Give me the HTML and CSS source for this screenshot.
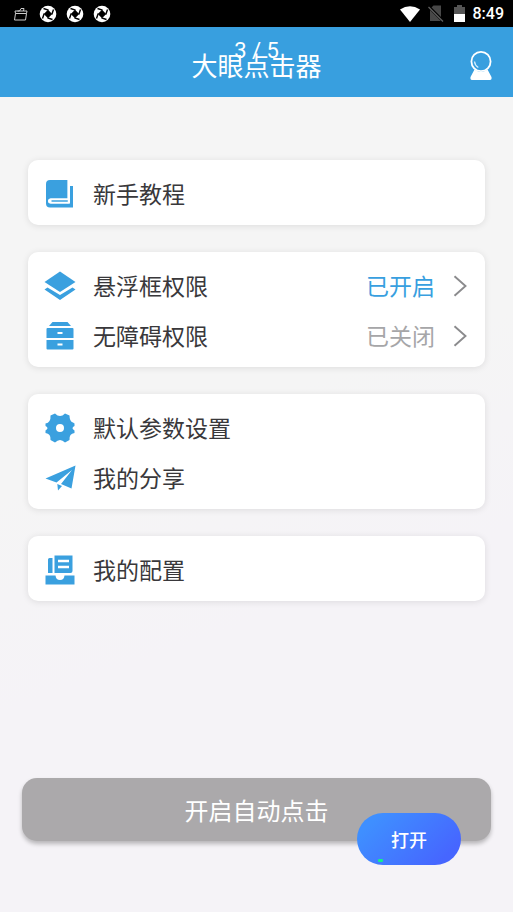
FILE: index.html
```html
<!DOCTYPE html>
<html lang="zh-CN">
<head>
<meta charset="utf-8">
<meta name="viewport" content="width=device-width, initial-scale=1">
<title>大眼点击器</title>
<link rel="stylesheet" href="styles.css">
</head>
<body>
<svg class="defs" aria-hidden="true">
  <symbol id="shutter" viewBox="0 0 18 18">
    <circle cx="9" cy="9" r="8.300" fill="#fff"/>
    <path d="M9 4.800 13.200 9 9 13.200 4.800 9z" fill="#000"/>
    <path d="M9.500 5.200 4.500 3.500M12.800 9.500l1.700-5M8.500 12.800l5 1.700M5.200 8.500l-1.700 5" stroke="#000" stroke-width="1.400"/>
  </symbol>
  <symbol id="chevron" viewBox="0 0 14 22">
    <path d="M1.500 1.200 12.500 11 1.500 20.800" fill="none" stroke="#8b8b8d" stroke-width="1.900"/>
  </symbol>
</svg>
<div class="statusbar">
  <div class="notices">
    <svg class="notice" viewBox="0 0 18 18"><path d="M3.500 8.500h11l-1 6.500H2.500zM3.500 8.500 3 6h4.500L9 3.500h3l-.5 2.500H15l-.5 2.500M5.500 6h6" fill="none" stroke="#ccc" stroke-width="1"/></svg>
    <svg class="notice"><use href="#shutter"/></svg>
    <svg class="notice"><use href="#shutter"/></svg>
    <svg class="notice"><use href="#shutter"/></svg>
  </div>
  <div class="signals">
    <svg class="wifi" viewBox="0 0 20 16"><path d="M0 3.500Q10-3.200 20 3.500L10 16z" fill="#fff"/></svg>
    <svg class="sim" viewBox="0 0 16 17"><path d="M2 4 5.500.5H13V16H2z" fill="#484848"/><path d="M0 1 15 16" stroke="#000" stroke-width="3"/><path d="M.5 2 15 16.500" stroke="#606060" stroke-width="1.300"/></svg>
    <svg class="battery" viewBox="0 0 11 17"><path d="M0 2h3V0h5v2h3v7H0z" fill="#555"/><path d="M0 9h11v8H0z" fill="#fff"/></svg>
    <span>8:49</span>
  </div>
</div>
<header class="topbar">
  <h1>大眼点击器</h1>
  <span class="counter">3 / 5</span>
  <button class="profile" aria-label="我的">
    <svg viewBox="0 0 24 30"><circle cx="12" cy="10.500" r="9.600" fill="none" stroke="#fff" stroke-width="1.800"/><path d="M5.500 18.500Q12 23 18.500 18.500L22.500 26Q23 29 21 29H3Q1 29 1.500 26z" fill="#fff"/><path d="M5.500 10.500Q6 14.500 9.300 16.500" fill="none" stroke="#d7efff" stroke-width="1.300"/></svg>
  </button>
</header>
<main>
  <section class="card">
    <a class="row" href="#guide">
      <svg class="icon" viewBox="0 0 32 32"><path d="M6 2H23.500V20.500H7Q4.500 20.500 4.500 23T7 25.500H26V8H29V29.500H6Q2 29.500 2 25.500V6Q2 2 6 2z"/><path d="M5.500 20.500H24V25.500H6.500Q4 25.500 4 23T6.500 20.500z" fill="#fff"/><path d="M7.500 23H24" stroke="#3aa0df" stroke-width="1.500"/><path d="M24.500 2V25.500" stroke="#fff" stroke-width="1.500"/></svg>
      <span>新手教程</span>
    </a>
  </section>
  <section class="card">
    <a class="row" href="#overlay">
      <svg class="icon" viewBox="0 0 32 32"><path d="M16 1.500 31.500 12 16 22 .5 12z"/><path d="M.5 19.500 3.500 17.500 16 25 28.500 17.500l3 2L16 30z"/></svg>
      <span>悬浮框权限</span><span class="state on">已开启</span><svg class="chevron"><use href="#chevron"/></svg>
    </a>
    <a class="row" href="#accessibility">
      <svg class="icon" viewBox="0 0 32 32"><path d="M8.500 2h15L27 6H5zM3.500 8h25q1 0 1 1v9h-27V9q0-1 1-1zM2.500 20h27v8.500q0 1-1 1h-25q-1 0-1-1z"/><path d="M13.500 13h5M13.500 24.500h5" stroke="#fff" stroke-width="2"/></svg>
      <span>无障碍权限</span><span class="state">已关闭</span><svg class="chevron"><use href="#chevron"/></svg>
    </a>
  </section>
  <section class="card">
    <a class="row" href="#defaults">
      <svg class="icon" viewBox="0 0 32 32"><path fill-rule="evenodd" d="M11 1.500Q16 6.500 21 1.500L25.500 3.500Q25.500 9.500 29 10.500L30.500 11.500V14Q26.500 16 30.500 18.500V21Q25 21.500 25.500 28L21 30.500Q16 25.500 11 30.500L6.500 28Q7 21.500 1.500 21V18.500Q5.500 16 1.500 14V11.500Q7 10.500 6.500 3.500zM16 12a4 4 0 1 0 0 8 4 4 0 0 0 0-8z"/></svg>
      <span>默认参数设置</span>
    </a>
    <a class="row" href="#share">
      <svg class="icon" viewBox="0 0 32 32"><path d="M31.500 3.500 27.500 26.500 17 22 28 8 12.500 20.500 1.500 16.500zM13.300 22 18 24 14 28.500z"/></svg>
      <span>我的分享</span>
    </a>
  </section>
  <section class="card">
    <a class="row" href="#config">
      <svg class="icon" viewBox="0 0 32 32"><path d="M5.500 4H8.500V19H4V5.500q0-1.500 1.500-1.500zM10.500 1.500H28.500V17Q28.500 19 26.500 19H10.500zM1.500 21.500H11.500Q12 26 16 26t4.500-4.500H30.500V30.500H1.500z"/><path d="M14 7h11M14 13h11" stroke="#fff" stroke-width="2.500"/></svg>
      <span>我的配置</span>
    </a>
  </section>
  <button class="start">开启自动点击</button>
</main>
<button class="open">打开</button>
</body>
</html>
```

FILE: styles.css
```css
* { box-sizing: border-box; }

body {
  margin: 0;
  min-height: 100vh;
  display: flex;
  flex-direction: column;
  position: relative;
  font-family: "Noto Sans CJK SC", sans-serif;
  color: #39383b;
  background: linear-gradient(160deg, #f5f5f5 45%, #f5f3f7 65%);
}

button { border: 0; padding: 0; font-family: inherit; cursor: pointer; }

.defs { position: absolute; width: 0; height: 0; }

.statusbar {
  height: 27px;
  padding: 0 9px 0 12px;
  display: flex;
  align-items: center;
  justify-content: space-between;
  background: #000;
  color: #fff;
  font: 500 16px/28px Roboto, sans-serif;
}

.notices, .signals { display: flex; align-items: center; }
.notices { gap: 9px; }
.notice { width: 18px; height: 18px; }
.signals { gap: 8px; }
.wifi { width: 20px; height: 16px; }
.sim { width: 16px; height: 17px; }
.battery { width: 11px; height: 17px; margin-left: 2px; }

.topbar {
  position: relative;
  height: 70px;
  padding-top: 6px;
  display: flex;
  align-items: center;
  justify-content: center;
  background: #389fdf;
  color: #fff;
}

.topbar h1 { margin: 0; font-size: 26px; line-height: 36px; font-weight: 400; }

.counter {
  position: absolute;
  top: 10px;
  left: 0;
  right: 0;
  text-align: center;
  font: 22px/28px Roboto, sans-serif;
}

.profile {
  position: absolute;
  right: 20px;
  top: 24px;
  width: 24px;
  height: 30px;
  background: none;
}

.profile svg { display: block; width: 24px; height: 30px; }

main {
  flex: 1;
  display: flex;
  flex-direction: column;
  gap: 27px;
  padding: 63px 28px 71px;
}

.card {
  padding: 9px 16px 6px;
  border-radius: 10px;
  background: #fff;
  box-shadow: 0 1px 7px rgba(0, 0, 0, 0.1);
}

.row {
  display: flex;
  align-items: center;
  height: 50px;
  color: inherit;
  text-decoration: none;
  font-size: 23px;
  line-height: 34px;
}

.row span { padding-bottom: 2px; }
.icon { width: 32px; height: 32px; margin-right: 17px; fill: #3aa0df; }
.state { margin-left: auto; color: #a6a6a8; }
.state.on { color: #389fdf; }
.chevron { width: 14px; height: 22px; margin: 0 2px 0 18px; }

.start {
  margin: auto -6px 0;
  height: 63px;
  border-radius: 15px;
  background: #aba9ab;
  box-shadow: 0 3px 4px rgba(0, 0, 0, 0.25);
  color: #fff;
  font-size: 24px;
}

.open {
  position: absolute;
  right: 52px;
  bottom: 47px;
  width: 104px;
  height: 52px;
  border-radius: 26px;
  background: linear-gradient(135deg, #3f8fff 15%, #4666ff 85%);
  color: #fff;
  font-size: 18px;
  font-weight: 500;
}

.open::after {
  content: "";
  position: absolute;
  left: 21px;
  bottom: 3px;
  width: 5px;
  height: 3px;
  border-radius: 1px;
  background: #12ef8c;
}
```
